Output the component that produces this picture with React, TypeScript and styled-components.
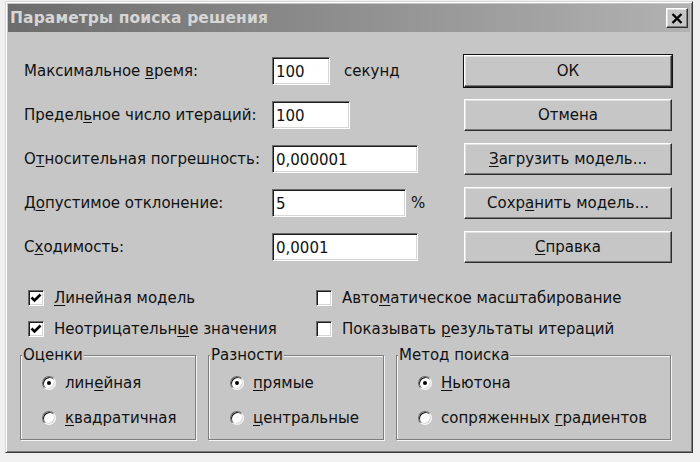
import React from 'react';
import styled, { createGlobalStyle } from 'styled-components';

const GlobalStyle = createGlobalStyle`
  html, body {
    margin: 0;
    padding: 0;
    background: #f0f0f0;
  }
  body {
    font-family: 'DejaVu Sans', Verdana, sans-serif;
    color: #111;
  }
`;

const face = '#c6c6c6';

const fields = [
  { label: 'Максимальное &время:', value: '100', width: 58, suffix: 'секунд', suffixGap: 14, button: 'ОК', isDefault: true },
  { label: 'Предел&ьное число итераций:', value: '100', width: 78, button: 'Отмена' },
  { label: 'О&тносительная погрешность:', value: '0,000001', width: 146, button: '&Загрузить модель...' },
  { label: 'Д&опустимое отклонение:', value: '5', width: 134, suffix: '%', suffixGap: 5, button: 'Сохр&анить модель...' },
  { label: 'С&ходимость:', value: '0,0001', width: 146, button: '&Справка' },
];

const checks = [
  { label: '&Линейная модель', checked: true },
  { label: 'Авто&матическое масштабирование', checked: false },
  { label: 'Неотрицательн&ые значения', checked: true },
  { label: 'Показывать &результаты итераций', checked: false },
];

const groups = [
  { title: 'Оценки', width: 176, options: ['лин&ейная', '&квадратичная'] },
  { title: 'Разности', width: 176, options: ['&прямые', '&центральные'] },
  { title: 'Метод поиска', width: 275, options: ['&Ньютона', 'сопряженных &градиентов'] },
];

const withKey = (text: string) => {
  const i = text.indexOf('&');
  if (i < 0) return text;
  return (
    <>
      {text.slice(0, i)}
      <Key>{text[i + 1]}</Key>
      {text.slice(i + 2)}
    </>
  );
};

const App = () => (
  <Page>
    <GlobalStyle />
    <Window>
      <TitleBar>
        <Title>Параметры поиска решения</Title>
        <CloseButton type="button">
          <svg width="12" height="11" viewBox="0 0 12 11">
            <path d="M1.5 1 L10.5 10 M10.5 1 L1.5 10" stroke="#000" strokeWidth="2.4" />
          </svg>
        </CloseButton>
      </TitleBar>
      <Body>
        <FieldGrid>
          {fields.map(({ label, value, width, suffix, suffixGap, button, isDefault }) => (
            <React.Fragment key={label}>
              <Label>{withKey(label)}</Label>
              <InputCell>
                <TextInput readOnly value={value} $width={width} />
                {suffix && <Suffix $gap={suffixGap ?? 0}>{suffix}</Suffix>}
              </InputCell>
              <Button type="button" $default={!!isDefault}>
                {withKey(button)}
              </Button>
            </React.Fragment>
          ))}
        </FieldGrid>
        <CheckGrid>
          {checks.map(({ label, checked }) => (
            <CheckRow key={label}>
              <CheckBox>
                {checked && (
                  <svg width="12" height="12" viewBox="0 0 12 12">
                    <polyline points="1.5,5.5 4.5,8.5 10.5,2.5" fill="none" stroke="#000" strokeWidth="2.6" />
                  </svg>
                )}
              </CheckBox>
              <span>{withKey(label)}</span>
            </CheckRow>
          ))}
        </CheckGrid>
        <Groups>
          {groups.map(({ title, width, options }) => (
            <GroupBox key={title} $width={width}>
              <Legend>{title}</Legend>
              <RadioList>
                {options.map((opt, i) => (
                  <RadioRow key={opt}>
                    <Radio $checked={i === 0} />
                    <span>{withKey(opt)}</span>
                  </RadioRow>
                ))}
              </RadioList>
            </GroupBox>
          ))}
        </Groups>
      </Body>
    </Window>
  </Page>
);

export default App;

const Page = styled.div`
  padding: 1px 0 0 5px;
  width: 700px;
  height: 462px;
  box-sizing: border-box;
  background: #f0f0f0;
`;

const Window = styled.div`
  width: 688px;
  box-sizing: border-box;
  background: ${face};
  border: 1px solid;
  border-color: #d8d8d8 #383838 #383838 #d8d8d8;
  box-shadow: inset 1px 1px #fff, inset -1px -1px #7c7c7c;
  padding: 2px;
`;

const TitleBar = styled.div`
  height: 28px;
  display: flex;
  align-items: center;
  justify-content: space-between;
  padding: 0 2px 0 2px;
  background: linear-gradient(to right, #6c6c6c, #b2b2b2);
`;

const Title = styled.span`
  font-size: 15.5px;
  font-weight: bold;
  color: #d6d6d6;
  letter-spacing: 0.1px;
`;

const CloseButton = styled.button`
  width: 22px;
  height: 20px;
  padding: 0;
  display: flex;
  align-items: center;
  justify-content: center;
  background: ${face};
  border: 1px solid;
  border-color: #fff #303030 #303030 #fff;
  box-shadow: inset -1px -1px #7a7a7a, inset 1px 1px #e2e2e2;
`;

const Body = styled.div`
  padding: 17px 18px 10px 12px;
  font-size: 15px;
`;

const FieldGrid = styled.div`
  display: grid;
  grid-template-columns: 248px 1fr 208px;
  grid-auto-rows: 44px;
  align-items: center;
  padding-left: 4px;
`;

const Label = styled.span`
  white-space: nowrap;
`;

const InputCell = styled.div`
  display: flex;
  align-items: center;
`;

const TextInput = styled.input<{ $width: number }>`
  width: ${({ $width }) => $width}px;
  height: 28px;
  box-sizing: border-box;
  padding: 2px 3px 0;
  font: inherit;
  color: #111;
  background: #fff;
  border: 1px solid;
  border-color: #6a6a6a #fff #fff #6a6a6a;
  box-shadow: inset 1px 1px #1c1c1c, inset -1px -1px #d6d6d6;
  outline: none;
`;

const Suffix = styled.span<{ $gap: number }>`
  margin-left: ${({ $gap }) => $gap}px;
`;

const Button = styled.button<{ $default: boolean }>`
  height: 32px;
  width: 100%;
  box-sizing: border-box;
  font: inherit;
  color: #111;
  background: ${face};
  border: 1px solid;
  border-color: #fff #2c2c2c #2c2c2c #fff;
  box-shadow: inset -1px -1px #787878, inset 1px 1px #e2e2e2
    ${({ $default }) => ($default ? ', 0 0 0 1px #111' : '')};
`;

const Key = styled.span`
  text-decoration: underline;
  text-decoration-thickness: 1px;
  text-underline-offset: 2px;
`;

const CheckGrid = styled.div`
  margin-top: 13px;
  display: grid;
  grid-template-columns: 288px 1fr;
  grid-auto-rows: 31px;
  align-items: center;
  padding-left: 8px;
`;

const CheckRow = styled.div`
  display: flex;
  align-items: center;
  gap: 10px;
  white-space: nowrap;
`;

const CheckBox = styled.span`
  width: 16px;
  height: 16px;
  box-sizing: border-box;
  display: flex;
  align-items: center;
  justify-content: center;
  background: #fff;
  border: 1px solid;
  border-color: #6a6a6a #fff #fff #6a6a6a;
  box-shadow: inset 1px 1px #1c1c1c, inset -1px -1px #d6d6d6;
`;

const Groups = styled.div`
  margin-top: 2px;
  display: flex;
  gap: 12px;
`;

const GroupBox = styled.fieldset<{ $width: number }>`
  width: ${({ $width }) => $width}px;
  box-sizing: border-box;
  margin: 0;
  padding: 0;
  min-width: 0;
  border: 1px solid #7e7e7e;
  box-shadow: inset 1px 1px #f4f4f4, 1px 1px #f4f4f4;
`;

const Legend = styled.legend`
  margin-left: 1px;
  padding: 0 1px;
  line-height: 18px;
  background: ${face};
`;

const RadioList = styled.div`
  padding: 1px 0 4px 21px;
  display: flex;
  flex-direction: column;
`;

const RadioRow = styled.div`
  height: 35px;
  display: flex;
  align-items: center;
  gap: 9px;
  white-space: nowrap;
`;

const Radio = styled.span<{ $checked: boolean }>`
  position: relative;
  width: 14px;
  height: 14px;
  box-sizing: border-box;
  border-radius: 50%;
  background: #fff;
  border: 1px solid;
  border-color: #6a6a6a #f4f4f4 #f4f4f4 #6a6a6a;
  box-shadow: inset 1px 1px #1c1c1c, inset -1px -1px #d6d6d6;

  &::after {
    content: '';
    display: ${({ $checked }) => ($checked ? 'block' : 'none')};
    position: absolute;
    left: 4px;
    top: 4px;
    width: 4px;
    height: 4px;
    border-radius: 50%;
    background: #000;
  }
`;
